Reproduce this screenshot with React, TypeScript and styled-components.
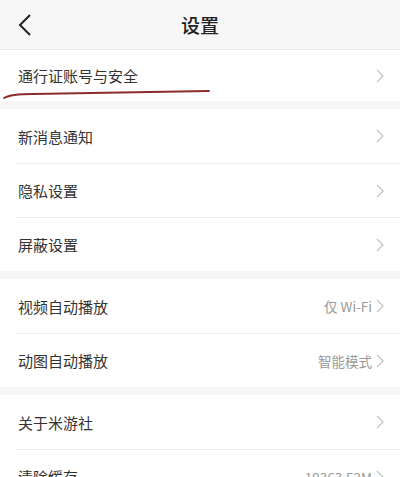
import styled, { createGlobalStyle } from "styled-components";

const GlobalStyle = createGlobalStyle`
  body {
    margin: 0;
    background: #f6f6f6;
    font-family: "Noto Sans CJK SC", "Noto Sans", sans-serif;
  }
`;

type Item = { label: string; value?: string };

const sections: Item[][] = [
  [{ label: "通行证账号与安全" }],
  [{ label: "新消息通知" }, { label: "隐私设置" }, { label: "屏蔽设置" }],
  [
    { label: "视频自动播放", value: "仅 Wi-Fi" },
    { label: "动图自动播放", value: "智能模式" },
  ],
  [{ label: "关于米游社" }, { label: "清除缓存", value: "19363.52M" }],
];

const Chevron = () => (
  <svg width="8" height="14" viewBox="0 0 8 14">
    <path d="M1 1 L7 7 L1 13" fill="none" stroke="#c4c4c4" strokeWidth="1.3" />
  </svg>
);

const App = () => {
  return (
    <>
      <GlobalStyle />
      <Page>
        <Header>
          <BackButton>
            <svg width="14" height="24" viewBox="0 0 14 24">
              <path d="M12 2 L2 12 L12 22" fill="none" stroke="#222" strokeWidth="2" />
            </svg>
          </BackButton>
          <Title>设置</Title>
        </Header>
        {sections.map((items, si) => (
          <Section key={si}>
            {items.map((item, i) => (
              <Row key={i} $divider={i > 0} $short={si === 0}>
                <Label>{item.label}</Label>
                <Right>
                  {item.value && <Value>{item.value}</Value>}
                  <Chevron />
                </Right>
              </Row>
            ))}
            {si === 0 && (
              <Scribble width="215" height="14" viewBox="0 0 215 14">
                <path
                  d="M1 11 C 6 8, 14 7, 30 7 C 80 6, 150 5, 206 4"
                  fill="none"
                  stroke="#8a2c2a"
                  strokeWidth="1.8"
                  strokeLinecap="round"
                />
              </Scribble>
            )}
          </Section>
        ))}
      </Page>
    </>
  );
};

export default App;

const Page = styled.div`
  width: 400px;
  height: 477px;
  overflow: hidden;
  display: flex;
  flex-direction: column;
  gap: 8px;
`;

const Header = styled.div`
  height: 50px;
  flex-shrink: 0;
  display: flex;
  align-items: center;
  justify-content: center;
  position: relative;
  background: #f7f7f7;
  border-bottom: 1px solid #ececec;
  box-sizing: border-box;
  margin-bottom: -8px;
`;

const BackButton = styled.div`
  position: absolute;
  left: 18px;
  top: 13px;
  display: flex;
`;

const Title = styled.h1`
  margin: 0;
  font-size: 19px;
  font-weight: 500;
  color: #222;
`;

const Section = styled.div`
  background: #fff;
  position: relative;
  flex-shrink: 0;
`;

const Row = styled.div<{ $divider: boolean; $short: boolean }>`
  height: ${(p) => (p.$short ? "51px" : "54px")};
  margin-left: 16px;
  padding-right: 16px;
  display: flex;
  align-items: center;
  justify-content: space-between;
  border-top: ${(p) => (p.$divider ? "1px solid #eeeeee" : "none")};
  box-sizing: border-box;
`;

const Label = styled.span`
  font-size: 15px;
  color: #333;
  padding-left: 2px;
`;

const Right = styled.div`
  display: flex;
  align-items: center;
  gap: 4px;
`;

const Value = styled.span`
  font-size: 13.5px;
  color: #9a9a9a;
`;

const Scribble = styled.svg`
  position: absolute;
  left: 3px;
  top: 37px;
`;
